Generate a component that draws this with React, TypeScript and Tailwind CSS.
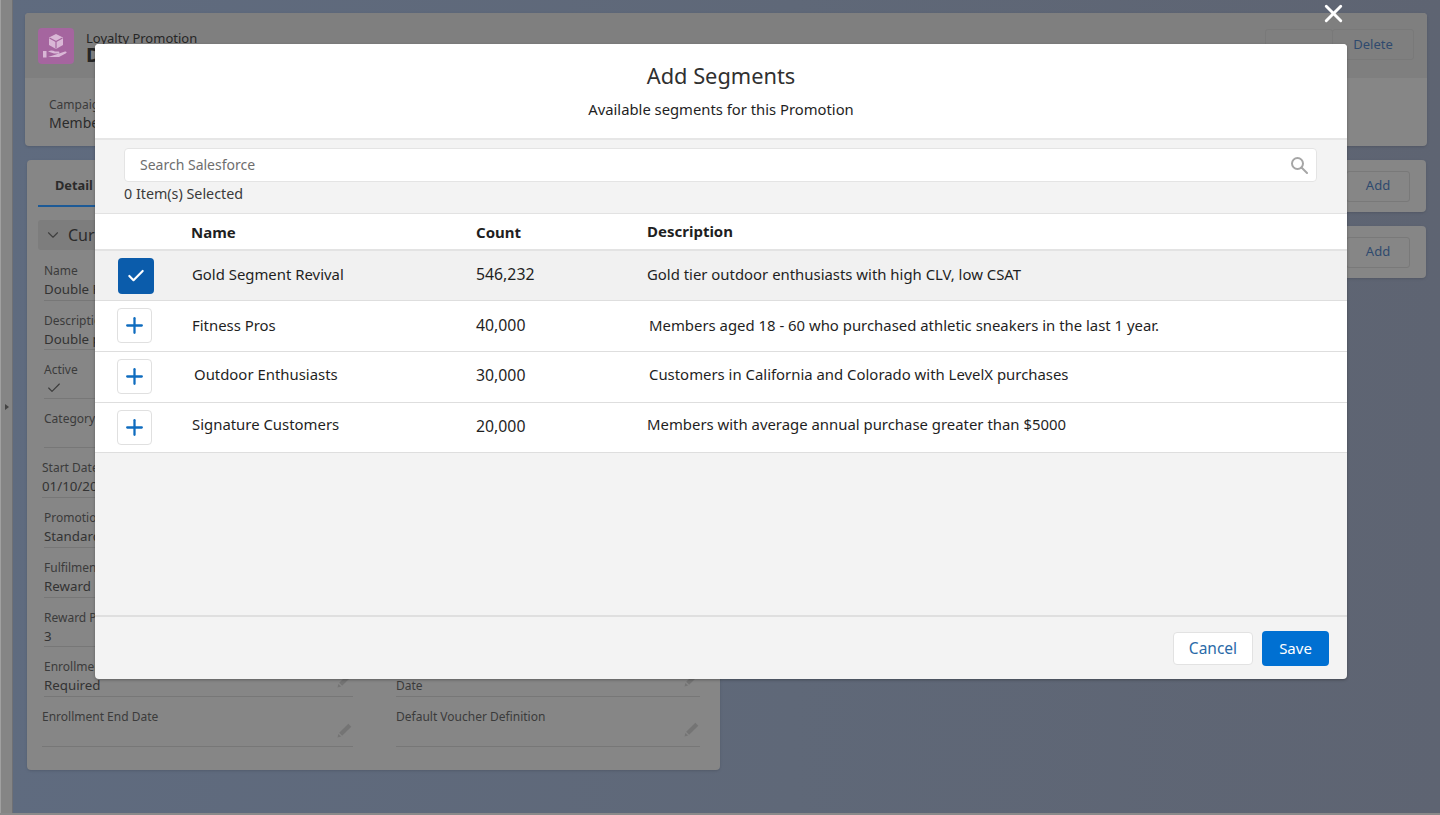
import React from "react";
import { ChevronDown, Check, Plus, X } from "lucide-react";

const fields = [
  { label: "Name", value: "Double Points", h: "h-[50px]", x: "pl-[17px]" },
  { label: "Description", value: "Double points", h: "h-[49px]", x: "pl-[17px]" },
  { label: "Active", check: true, h: "h-[49px]", x: "pl-[17px]" },
  { label: "Category", value: "", h: "h-[49px]", x: "pl-[17px]" },
  { label: "Start Date", value: "01/10/2020", h: "h-[50px]", x: "pl-[15px]" },
  { label: "Promotion Type", value: "Standard", h: "h-[50px]", x: "pl-[17px]" },
  { label: "Fulfilment Action", value: "Reward Points", h: "h-[50px]", x: "pl-[17px]" },
  { label: "Reward Points", value: "3", h: "h-[49px]", x: "pl-[17px]" },
  { label: "Enrollment", value: "Required", h: "h-[50px]", x: "pl-[17px]", pen: true },
  { label: "Enrollment End Date", value: "", h: "h-[50px]", x: "pl-[15px]", pen: true },
];

const rows = [
  { name: "Gold Segment Revival", count: "546,232", desc: "Gold tier outdoor enthusiasts with high CLV, low CSAT", selected: true, nx: "", dx: "", h: "h-[50px]", ny: "-translate-y-[1px]", cy: "-translate-y-[1px]", by: "" },
  { name: "Fitness Pros", count: "40,000", desc: "Members aged 18 - 60 who purchased athletic sneakers in the last 1 year.", selected: false, nx: "", dx: "pl-[2px]", h: "h-[51px]", ny: "-translate-y-[1px]", cy: "", by: "-translate-y-[1px]" },
  { name: "Outdoor Enthusiasts", count: "30,000", desc: "Customers in California and Colorado with LevelX purchases", selected: false, nx: "pl-[2px]", dx: "pl-[2px]", h: "h-[51px]", ny: "-translate-y-[3px]", cy: "-translate-y-[1px]", by: "-translate-y-[1px]" },
  { name: "Signature Customers", count: "20,000", desc: "Members with average annual purchase greater than $5000", selected: false, nx: "", dx: "", h: "h-[50px]", ny: "-translate-y-[3px]", cy: "-translate-y-[1px]", by: "" },
];

function Pen() {
  return (
    <svg viewBox="0 0 16 16" className="absolute right-[0px] bottom-[8px] w-[17px] h-[17px] text-[#747474]" fill="currentColor">
      <path d="M11.6 1.6l2.8 2.8-8.6 8.600-2.800-2.800zM2.300 11.200l2.500 2.500-3.400 1z" />
    </svg>
  );
}

function SearchGlyph() {
  return (
    <svg viewBox="0 0 18 18" className="w-[18px] h-[18px]" fill="none" stroke="#a6a6a6">
      <circle cx="7.500" cy="7.500" r="5.500" strokeWidth="2" />
      <path d="M11.500 11.500L17 17" strokeWidth="2" strokeLinecap="round" />
    </svg>
  );
}

function Logo() {
  return (
    <div className="w-[36px] h-[36px] rounded-[4px] bg-[#a5659f] flex items-center justify-center">
      <svg viewBox="0 0 36 36" className="w-[36px] h-[36px]" fill="none">
        <path d="M18 6l7 3.500v7.500l-7 4-7-4V9.500z" fill="#d9b7d6" />
        <path d="M11.500 10l6.500 3.500 6.500-3.500M18 13.500V20.500" stroke="#a5659f" strokeWidth="1.200" />
        <path d="M5 23h3.500v6.500H5z" fill="#d9b7d6" />
        <path d="M10 23.500c3-1.500 5-1 7 0h3.500c1.200 0 1.200 2 0 2H16m5 0l6-2c1.500-.4 2.200 1 1 1.800l-7 3.700H10z" fill="#d9b7d6" />
      </svg>
    </div>
  );
}

function BgButton({ children, className = "" }: { children?: React.ReactNode; className?: string }) {
  return (
    <div className={`h-[31px] border border-[#797979] rounded-[3px] flex items-center justify-center text-[13px] text-[#2f4a6e] ${className}`}>
      {children}
    </div>
  );
}

export default function App() {
  return (
    <div className="relative w-[1440px] h-[815px] overflow-hidden bg-[linear-gradient(90deg,#5f6b7f,#5f6878_55%,#5e6472)] font-['Noto_Sans','Open_Sans',sans-serif] text-[#2b2b2b]">
      {/* page behind the dialog */}
      <div className="flex h-[813px]">
        <div className="w-[13px] shrink-0 bg-[#858585] border-l border-[#a0a0a0] border-r border-r-[#6f7074] relative flex items-center">
          <div className="w-0 h-0 ml-[4px] border-y-[3px] border-y-transparent border-l-[4px] border-l-[#444]" />
        </div>
        <div className="flex-1 pl-[12px] pr-[13px] pt-[13px]">
          {/* summary card */}
          <div className="h-[133px] rounded-[4px] bg-[#868686] overflow-hidden shadow-sm">
            <div className="h-[65px] bg-[#7f7f7f] flex items-center pl-[13px] pr-[13px]">
              <Logo />
              <div className="ml-[12px] mt-[5px] text-[#262626]">
                <div className="text-[13px] leading-[14px]">Loyalty Promotion</div>
                <div className="text-[20px] leading-[20px] font-bold">Double Points</div>
              </div>
              <div className="ml-auto flex -mt-[2px]">
                <BgButton className="w-[68px]" />
                <BgButton className="w-[82px] -ml-[1px]">Delete</BgButton>
              </div>
            </div>
            <div className="pl-[24px] pt-[18px] text-[#2b2b2b]">
              <div className="text-[12px] leading-[17px] text-[#3b3b3b]">Campaign</div>
              <div className="text-[14px] leading-[19px]">Member</div>
            </div>
          </div>

          <div className="flex mt-[14px] pl-[2px]">
            {/* detail card */}
            <div className="w-[693px] h-[610px] rounded-[4px] bg-[#868686] shadow-sm">
              <div className="h-[47px] ml-[11px] mr-[20px] pt-[15px] border-b-[2px] border-[#7a7a7a] relative">
                <span className="ml-[17px] text-[12.800px] leading-[20px] font-bold block">Detail</span>
                <div className="absolute left-0 -bottom-[2px] w-[120px] h-[2px] bg-[#1d5a96]" />
              </div>
              <div className="h-[30px] mt-[13px] ml-[11px] mr-[20px] bg-[#7d7d7d] rounded-[3px] flex items-center pl-[6px] gap-[6px]">
                <ChevronDown size={18} strokeWidth={1.500} className="text-[#3f3f3f]" />
                <span className="text-[16px]">Current</span>
              </div>
              <div className="mt-[1px]">
                {fields.map((f) => (
                  <div key={f.label} className={`${f.h} ${f.x} w-[326px] relative`}>
                    <div className="h-full border-b border-[#777] pt-[11px]">
                      <div className="text-[12px] leading-[18px] text-[#3b3b3b]">{f.label}</div>
                      {f.check ? (
                        <Check size={16} strokeWidth={1.700} className="mt-[1px] ml-[2px] text-[#3b3b3b]" />
                      ) : (
                        <div className="text-[13.300px] leading-[18px] text-[#333]">{f.value}</div>
                      )}
                      {f.pen ? <Pen /> : null}
                    </div>
                  </div>
                ))}
              </div>
              <div className="relative -mt-[99px] ml-[369px] w-[304px]">
                <div className="h-[49px] relative border-b border-[#777] pt-[29px]">
                  <div className="text-[12px] leading-[18px] text-[#3b3b3b]">Date</div>
                  <Pen />
                </div>
                <div className="h-[50px] relative border-b border-[#777] pt-[11px]">
                  <div className="text-[12px] leading-[18px] text-[#3b3b3b]">Default Voucher Definition</div>
                  <Pen />
                </div>
              </div>
            </div>
            {/* related cards */}
            <div className="ml-[14px] flex-1 flex flex-col gap-[14px] pr-[1px]">
              {[0, 1].map((i) => (
                <div key={i} className="h-[52px] rounded-[4px] bg-[#868686] shadow-sm flex items-center justify-end pr-[16px]">
                  <BgButton className="w-[64px]">Add</BgButton>
                </div>
              ))}
            </div>
          </div>
        </div>
      </div>
      <div className="h-[2px] bg-[#8a8a8a]" />

      {/* close */}
      <button className="absolute left-[1319px] top-[-1px] w-[29px] h-[29px] flex items-center justify-center text-white">
        <X size={29} strokeWidth={2.400} />
      </button>

      {/* dialog */}
      <div className="absolute left-[95px] top-[44px] w-[1252px] h-[635px] rounded-[4px] bg-[#f3f3f3] flex flex-col overflow-hidden shadow-[0_1px_3px_rgba(0,0,0,0.3)]">
        <div className="h-[96px] shrink-0 bg-white border-b-[2px] border-[#e6e6e6] text-center">
          <div className="pt-[17px] text-[21.800px] leading-[30px] text-[#303030]">Add Segments</div>
          <div className="mt-[8px] text-[14.800px] leading-[20px] text-[#1f1f1f]">Available segments for this Promotion</div>
        </div>
        <div className="h-[74px] shrink-0 px-[29px] pt-[8px] border-b border-[#e2e2e2]">
          <div className="w-[1193px] h-[34px] bg-white border border-[#e4e4e4] rounded-[4px] flex items-center pl-[15px] pr-[8px]">
            <span className="text-[14px] text-[#6e6e6e] flex-1 -translate-y-[1px]">Search Salesforce</span>
            <SearchGlyph />
          </div>
          <div className="mt-[2px] text-[14.300px] leading-[19px] text-[#3a3a3a]">0 Item(s) Selected</div>
        </div>
        <div className="h-[37px] shrink-0 bg-white border-b-[2px] border-[#e3e3e3] grid grid-cols-[97px_284px_171px_1fr] items-center text-[15px] font-bold text-[#1f1f1f]">
          <div />
          <div className="translate-y-[1px] -translate-x-[1px]">Name</div>
          <div className="translate-y-[1px]">Count</div>
          <div>Description</div>
        </div>
        {rows.map((r) => (
          <div
            key={r.name}
            className={`${r.h} shrink-0 border-b border-[#dedede] grid grid-cols-[97px_284px_171px_1fr] items-center text-[14.900px] text-[#1f1f1f] ${r.selected ? "bg-[#f1f1f1]" : "bg-white"}`}
          >
            <div className={`pl-[22px] ${r.by}`}>
              {r.selected ? (
                <div className="ml-[1px] w-[36px] h-[36px] rounded-[4px] bg-[#0b5cab] flex items-center justify-center">
                  <Check size={20} strokeWidth={2.600} className="text-white" />
                </div>
              ) : (
                <div className="w-[35px] h-[35px] rounded-[4px] bg-white border border-[#e0e0e0] flex items-center justify-center">
                  <Plus size={25} strokeWidth={2.200} className="text-[#0f6cbf]" />
                </div>
              )}
            </div>
            <div className={`${r.nx} ${r.ny}`}>{r.name}</div>
            <div className={`${r.cy} text-[15.800px]`}>{r.count}</div>
            <div className={`${r.dx} ${r.ny}`}>{r.desc}</div>
          </div>
        ))}
        <div className="flex-1" />
        <div className="h-[64px] shrink-0 border-t-[2px] border-[#dfdfdf] flex items-center justify-end pr-[18px] gap-[9px]">
          <button className="w-[80px] h-[33px] bg-white border border-[#e2e2e2] rounded-[4px] text-[#2a6aa8] text-[15.500px] pt-[1px]">Cancel</button>
          <button className="w-[67px] h-[35px] bg-[#0070d2] rounded-[4px] text-white text-[15px]">Save</button>
        </div>
      </div>
    </div>
  );
}
